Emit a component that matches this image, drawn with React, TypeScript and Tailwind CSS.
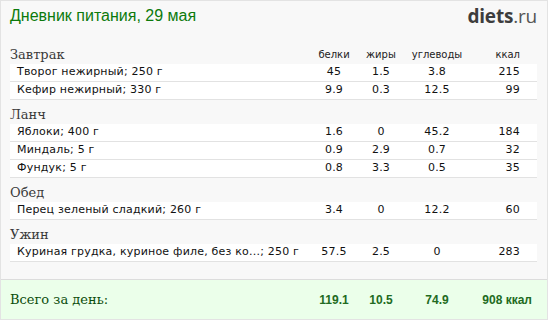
const sections = [
  {
    name: 'Завтрак',
    items: [
      { name: 'Творог нежирный; 250 г', p: '45', f: '1.5', c: '3.8', k: '215' },
      { name: 'Кефир нежирный; 330 г', p: '9.9', f: '0.3', c: '12.5', k: '99' },
    ],
  },
  {
    name: 'Ланч',
    items: [
      { name: 'Яблоки; 400 г', p: '1.6', f: '0', c: '45.2', k: '184' },
      { name: 'Миндаль; 5 г', p: '0.9', f: '2.9', c: '0.7', k: '32' },
      { name: 'Фундук; 5 г', p: '0.8', f: '3.3', c: '0.5', k: '35' },
    ],
  },
  {
    name: 'Обед',
    items: [{ name: 'Перец зеленый сладкий; 260 г', p: '3.4', f: '0', c: '12.2', k: '60' }],
  },
  {
    name: 'Ужин',
    items: [
      { name: 'Куриная грудка, куриное филе, без ко...; 250 г', p: '57.5', f: '2.5', c: '0', k: '283' },
    ],
  },
];

const sans = "font-['DejaVu_Sans',sans-serif]";
const serif = "font-['DejaVu_Serif',serif]";

function Cols({ p, f, c, k, className }: { p: string; f: string; c: string; k: string; className?: string }) {
  return (
    <div className={`flex shrink-0 ${className ?? ''}`}>
      <div className="w-[50px] text-center">{p}</div>
      <div className="w-[44px] text-center">{f}</div>
      <div className="w-[68px] text-center">{c}</div>
      <div className="w-[66px] pr-[17px] text-right">{k}</div>
    </div>
  );
}

export default function App() {
  return (
    <div className="w-[550px] h-[320px] bg-white">
      <div className="w-[548px] h-[320px] border border-[#e3e3e3] bg-[#f8f8f8] flex flex-col">
        <div className="h-[39px] flex items-start justify-between pl-[9px] pr-[10px] pt-[5px]">
          <div className="font-['Liberation_Sans',sans-serif] text-[16px] leading-[20px] text-[#0c7a0c]">
            Дневник питания, 29 мая
          </div>
          <div className="font-['Open_Sans',sans-serif] text-[19px] leading-[22px] text-[#3d3d3d] tracking-[-0.2px] -mt-[1px]">
            <span className="font-bold">diets</span>
            <span className="text-[#555]">.ru</span>
          </div>
        </div>

        {sections.map((s, i) => (
          <div key={s.name}>
            <div className="h-[24px] flex items-start pt-[6px] pl-[9px] pr-[10px]">
              <div className={`${serif} flex-1 text-[13px] leading-[18px] text-[#3a3a3a]`}>{s.name}</div>
              {i === 0 && (
                <Cols
                  p="белки"
                  f="жиры"
                  c="углеводы"
                  k="ккал"
                  className={`${sans} text-[10px] leading-[18px] text-[#222]`}
                />
              )}
            </div>
            {s.items.map((it) => (
              <div
                key={it.name}
                className={`${sans} ml-[9px] mr-[10px] h-[18px] flex items-center bg-white border-b border-[#e2e2e2] text-[11px] tracking-[0.2px] text-[#111]`}
              >
                <div className="flex-1 pl-[7px] whitespace-nowrap">{it.name}</div>
                <Cols p={it.p} f={it.f} c={it.c} k={it.k} />
              </div>
            ))}
          </div>
        ))}

        <div className="mt-auto h-[40px] border-t border-[#dcdcdc] bg-[#ebffea] flex items-center pl-[9px] pr-[10px]">
          <div className={`${serif} flex-1 text-[13px] text-[#0b4d0b]`}>Всего за день:</div>
          <div className="flex shrink-0 font-['Liberation_Sans',sans-serif] font-bold text-[12px] text-[#226b22]">
            <div className="w-[50px] text-center">119.1</div>
            <div className="w-[44px] text-center">10.5</div>
            <div className="w-[68px] text-center">74.9</div>
            <div className="w-[66px] pr-[5px] text-right">908 ккал</div>
          </div>
        </div>
      </div>
    </div>
  );
}
